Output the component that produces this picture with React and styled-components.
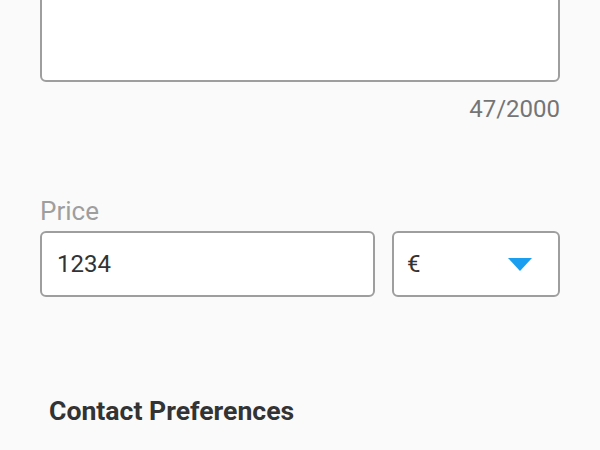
import React from 'react'
import styled, { createGlobalStyle } from 'styled-components'

const GlobalStyle = createGlobalStyle`
  html, body {
    margin: 0;
    padding: 0;
    background: #fafafa;
    font-family: Roboto, "Noto Sans", sans-serif;
    overflow: hidden;
  }
`

const Page = styled.div`
  width: 600px;
  height: 450px;
  overflow: hidden;
  background: #fafafa;
`

const Form = styled.div`
  padding: 0 40px;
  margin-top: -20px;
  display: flex;
  flex-direction: column;
`

const Description = styled.div`
  height: 102px;
  background: #fff;
  border: 2px solid #9e9e9e;
  border-radius: 6px;
  box-sizing: border-box;
`

const Counter = styled.div`
  text-align: right;
  font-size: 24px;
  color: #757575;
  margin-top: 13px;
  line-height: 28px;
`

const Label = styled.div`
  margin-top: 74px;
  font-size: 26px;
  line-height: 28px;
  color: #9e9e9e;
`

const Row = styled.div`
  display: flex;
  gap: 17px;
  margin-top: 6px;
`

const Field = styled.div`
  flex: ${(p) => p.$grow || 'none'};
  width: ${(p) => (p.$width ? `${p.$width}px` : 'auto')};
  height: 66px;
  box-sizing: border-box;
  background: #fff;
  border: 2px solid #9e9e9e;
  border-radius: 6px;
  display: flex;
  align-items: center;
  justify-content: space-between;
  padding: 0 26px 0 ${(p) => p.$pad || 15}px;
  font-size: 24px;
  color: #333;
`

const Heading = styled.h3`
  margin: 99px 0 0 9px;
  font-size: 26.6px;
  font-weight: 700;
  color: #333;
  line-height: 30px;
`

const App = () => {
  return (
    <Page>
      <GlobalStyle />
      <Form>
        <Description />
        <Counter>47/2000</Counter>
        <Label>Price</Label>
        <Row>
          <Field $grow="1">1234</Field>
          <Field $width={168} $pad={13}>
            <span>€</span>
            <svg width="24" height="13" viewBox="0 0 24 13">
              <path d="M0 0 L24 0 L12 13 Z" fill="#1a9ff0" />
            </svg>
          </Field>
        </Row>
        <Heading>Contact Preferences</Heading>
      </Form>
    </Page>
  )
}

export default App
